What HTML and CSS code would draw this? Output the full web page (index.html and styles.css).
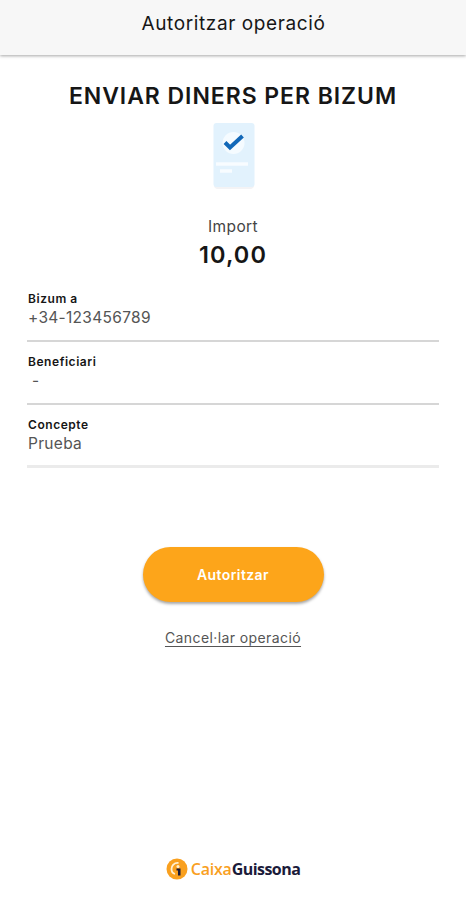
FILE: index.html
```html
<!DOCTYPE html>
<html lang="ca">
<head>
    <meta charset="UTF-8">
    <meta name="viewport" content="width=device-width, initial-scale=1.0">
    <title>Autoritzar operació</title>
    <link rel="stylesheet" href="styles.css">
</head>
<body>
    <header class="top-bar">Autoritzar operació</header>

    <main class="content">
        <h1>ENVIAR DINERS PER BIZUM</h1>
        <svg class="doc-icon" width="44" height="68" viewBox="0 0 44 68">
            <rect x="3" y="4" width="40" height="63" rx="4" fill="#f3f3f5"/>
            <rect x="2.500" y="1" width="41" height="64" rx="3" fill="#e2f2fd"/>
            <circle cx="22.500" cy="21" r="11" fill="#f5fbff"/>
            <path d="M14 20.500l5 5L31.500 14" fill="none" stroke="#1268b8" stroke-width="4"/>
            <path d="M5 42h32M9 49h12" stroke="#f8fcff" stroke-width="3.5"/>
        </svg>

        <div class="amount-label">Import</div>
        <div class="amount">10,00</div>

        <dl class="details">
            <div class="row">
                <dt>Bizum a</dt>
                <dd>+34-123456789</dd>
            </div>
            <div class="row">
                <dt>Beneficiari</dt>
                <dd class="empty">-</dd>
            </div>
            <div class="row last">
                <dt>Concepte</dt>
                <dd>Prueba</dd>
            </div>
        </dl>

        <button class="authorize">Autoritzar</button>
        <a class="cancel" href="#">Cancel·lar operació</a>
    </main>

    <footer class="brand">
        <svg width="22" height="22" viewBox="0 0 22 22">
            <circle cx="11" cy="11" r="10.5" fill="#f9a01f"/>
            <path d="M12.500 5C8 4.500 5.500 8 5.500 11c0 2.500 1.500 4.500 3.500 5" fill="none" stroke="#fff0d2" stroke-width="1.800"/>
            <circle cx="12" cy="8.500" r="1.500" fill="#fff0d2"/>
            <path d="M10.500 10.500h4v7h-2.500v-5h-1.500z" fill="#1b1b3a"/>
        </svg>
        <span class="brand-name"><span class="caixa">Caixa</span>Guissona</span>
    </footer>
</body>
</html>
```
FILE: styles.css
```css
body {
    margin: 0;
    height: 900px;
    display: flex;
    flex-direction: column;
    font-family: 'Inter', sans-serif;
    background-color: #fff;
    color: #161616;
}
.top-bar {
    height: 55px;
    line-height: 48px;
    flex-shrink: 0;
    box-sizing: border-box;
    padding-left: 1px;
    text-align: center;
    font-size: 19px;
    letter-spacing: 0.6px;
    background-color: #f7f7f7;
    box-shadow: 0 1px 3px rgba(0,0,0,0.35);
}
.content {
    flex: 1;
    padding: 26px 27px 0;
    display: flex;
    flex-direction: column;
    align-items: center;
}
h1 {
    margin: 0;
    font-size: 23px;
    line-height: 30px;
    font-weight: 600;
    letter-spacing: 0.95px;
    white-space: nowrap;
}
.doc-icon {
    margin-top: 11px;
}
.amount-label {
    margin-top: 27px;
    font-size: 15.5px;
    line-height: 20px;
    letter-spacing: 0.4px;
    color: #444;
}
.amount {
    margin-top: 3px;
    font-size: 23.5px;
    line-height: 30px;
    font-weight: 600;
    letter-spacing: 1.1px;
}
.details {
    align-self: stretch;
    margin: 20px 0 0;
}
.row {
    height: 52px;
    box-sizing: border-box;
    margin-bottom: 11px;
    padding-left: 1px;
    border-bottom: 2px solid #d6d6d6;
}
.row.last {
    margin-bottom: 0;
    border-bottom: 3px solid #ebebeb;
}
dt {
    font-size: 12px;
    line-height: 18px;
    font-weight: 600;
    letter-spacing: 0.55px;
}
dd {
    margin: 0;
    font-size: 15.5px;
    line-height: 20px;
    letter-spacing: 0.3px;
    color: #555;
}
.empty {
    padding-left: 4px;
}
.authorize {
    width: 181px;
    height: 55px;
    margin-top: 79px;
    border: none;
    border-radius: 28px;
    background-color: #fda51a;
    box-shadow: 0 2px 3px rgba(0,0,0,0.35);
    color: #fff;
    font-family: inherit;
    font-size: 14px;
    font-weight: 600;
    letter-spacing: 0.4px;
    cursor: pointer;
}
.cancel {
    margin-top: 26px;
    font-size: 14px;
    line-height: 20px;
    letter-spacing: 0.4px;
    color: #555;
    text-underline-offset: 3px;
    /* keep the middle dot of "l·l" as its own glyph */
    font-feature-settings: "locl" 0, "calt" 0;
}
.brand {
    height: 62px;
    display: flex;
    justify-content: center;
    align-items: center;
    align-self: center;
    gap: 3px;
}
.brand-name {
    font-family: 'Open Sans', sans-serif;
    font-size: 16px;
    font-weight: 700;
    letter-spacing: -0.55px;
    color: #1b1b3a;
}
.caixa {
    letter-spacing: -0.2px;
    font-weight: 600;
    color: #f9a01f;
}
```
